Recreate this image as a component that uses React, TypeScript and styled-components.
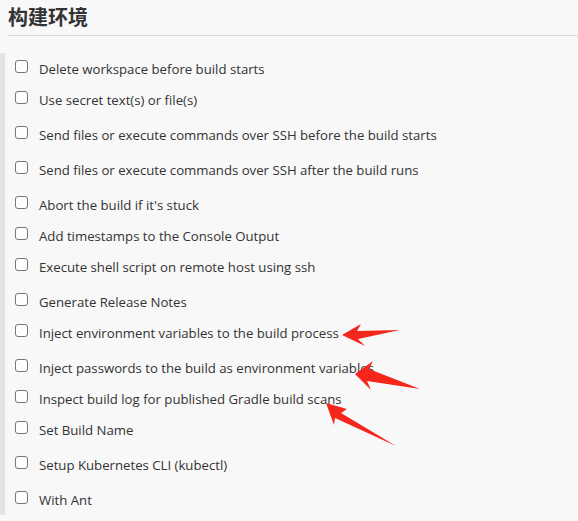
import React from "react";
import styled, { createGlobalStyle } from "styled-components";

const Global = createGlobalStyle`
  html, body { margin: 0; padding: 0; background: #f8f8f8; }
  body { font-family: "Open Sans", "Noto Sans", sans-serif; color: #333; }
  * { box-sizing: border-box; }
`;

const Page = styled.div`
  position: relative;
  width: 578px;
  height: 521px;
  overflow: hidden;
  background: #f8f8f8;
`;

const Header = styled.div`
  margin-left: 8px;
  height: 36px;
  border-bottom: 1px solid #dcdcdc;
  display: flex;
  align-items: center;
  padding-bottom: 2px;
`;

const Title = styled.h2`
  margin: 0;
  font-family: "Noto Sans CJK SC", sans-serif;
  font-weight: 700;
  font-size: 20px;
  line-height: 24px;
  color: #333;
`;

const Section = styled.div`
  margin-top: 17px;
  border-left: 5px solid #e3e3e3;
  padding-left: 10px;
  display: flex;
  flex-direction: column;
`;

const Row = styled.label<{ $extra: boolean }>`
  display: flex;
  align-items: center;
  height: 31px;
  margin-top: ${(p) => (p.$extra ? "4px" : "0")};
  gap: 11px;
  font-size: 13.2px;
  color: #333;
`;

const Box = styled.span`
  width: 13px;
  height: 13px;
  border: 1px solid #767676;
  border-radius: 3px;
  background: #fff;
  flex: none;
  margin-top: -4px;
`;

const Arrows = styled.svg`
  position: absolute;
  left: 0;
  top: 0;
  pointer-events: none;
`;

const items: [string, boolean][] = [
  ["Delete workspace before build starts", false],
  ["Use secret text(s) or file(s)", false],
  ["Send files or execute commands over SSH before the build starts", true],
  ["Send files or execute commands over SSH after the build runs", true],
  ["Abort the build if it's stuck", true],
  ["Add timestamps to the Console Output", false],
  ["Execute shell script on remote host using ssh", false],
  ["Generate Release Notes", true],
  ["Inject environment variables to the build process", false],
  ["Inject passwords to the build as environment variables", true],
  ["Inspect build log for published Gradle build scans", false],
  ["Set Build Name", false],
  ["Setup Kubernetes CLI (kubectl)", true],
  ["With Ant", true],
];

export default function App() {
  return (
    <Page>
      <Global />
      <Header>
        <Title>构建环境</Title>
      </Header>
      <Section>
        {items.map(([t, e]) => (
          <Row key={t} $extra={e}>
            <Box />
            <span>{t}</span>
          </Row>
        ))}
      </Section>
      <Arrows width="578" height="521" viewBox="0 0 578 521">
        <g fill="#f5261c">
          <polygon points="342,335 361,324 357,331 400,330 358,339 365,346" />
          <polygon points="355,374 373,361 369,369 420,389 367,381 371,390" />
          <polygon points="326,403 347,409 341,413 396,446 335,418 334,425" />
        </g>
      </Arrows>
    </Page>
  );
}
